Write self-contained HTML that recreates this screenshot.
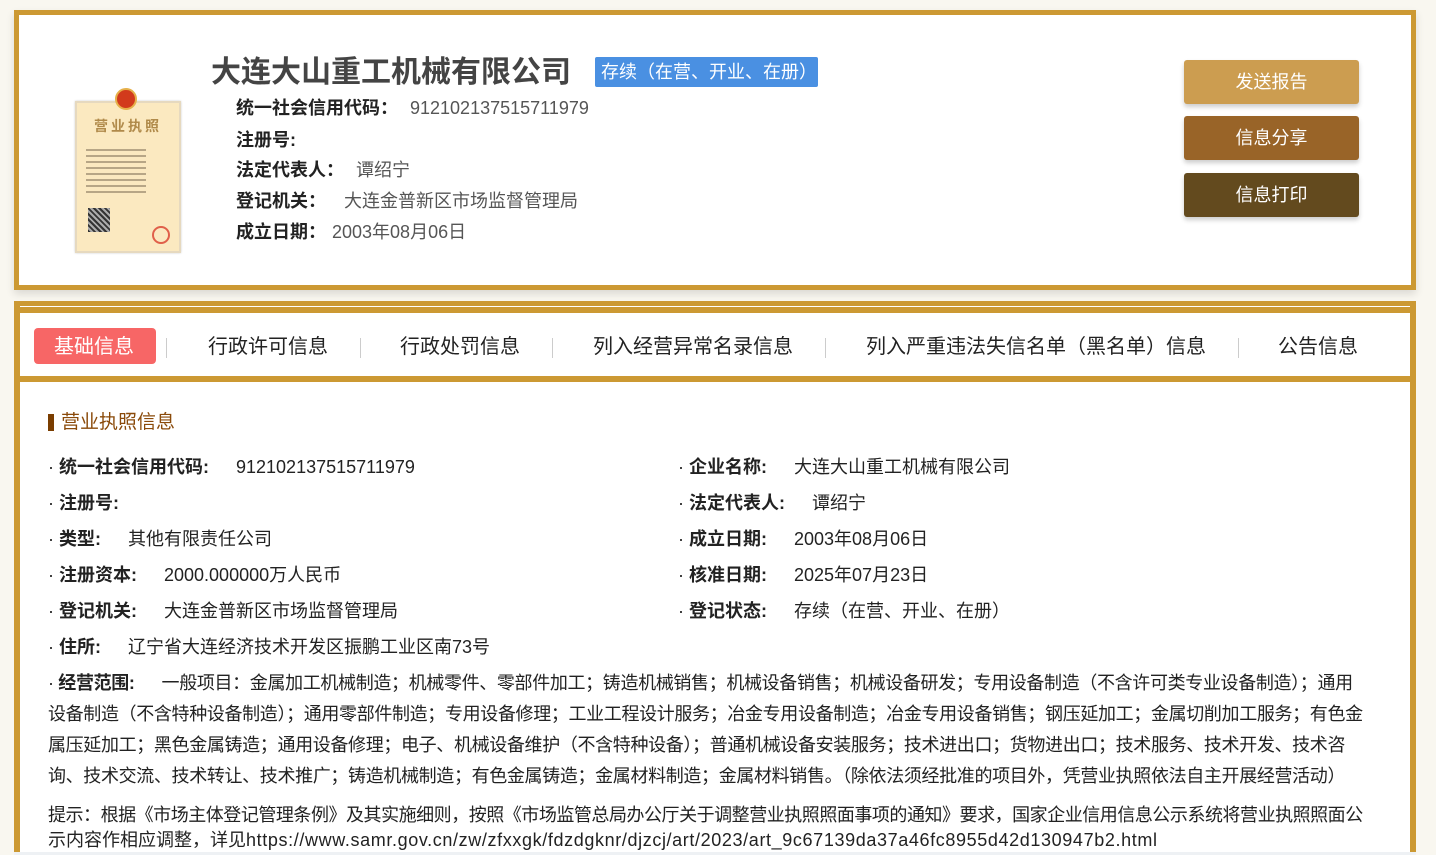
<!DOCTYPE html>
<html style="overflow:hidden;width:1436px;height:855px"><head><meta charset="utf-8"><style>
*{margin:0;padding:0;box-sizing:border-box}
body{width:1436px;height:855px;overflow:hidden;background:#f9f7f0;font-family:"Liberation Sans","Noto Sans CJK SC",sans-serif;color:#222;position:relative}
.a{position:absolute;white-space:nowrap;line-height:24px}
.top{position:absolute;left:14px;top:10px;width:1402px;height:280px;border:5px solid #cc9933;background:#fff;box-shadow:0 4px 8px rgba(0,0,0,.12)}
.box2{position:absolute;left:14px;top:301px;width:1402px;height:554px;background:#cc9933}
.btn{position:absolute;left:1184px;width:175px;height:44px;border-radius:3px;color:#fff;font-size:18px;text-align:center;line-height:44px;box-shadow:0 3px 5px rgba(0,0,0,.2)}
.f{font-size:18px}
.l{font-weight:bold;color:#222}
.v{color:#555}
.tab{position:absolute;top:335px;font-size:20px;color:#222;line-height:24px;white-space:nowrap}
.sep{position:absolute;top:338px;width:1px;height:20px;background:#ccc}
.c{font-size:18px;color:#222}
.c b{margin-right:27px}
.s{letter-spacing:-0.35px}
</style></head><body>
<div class="top"></div>
<div style="position:absolute;left:75px;top:101px;width:106px;height:152px;background:#fbe9c0;border:2px solid #e6d9bf;box-shadow:0 0 2px #ccc"></div>
<div style="position:absolute;left:115px;top:88px;width:22px;height:22px;border-radius:50%;background:#d23a1c;border:2px solid #e6b04a"></div>
<div class="a" style="left:94px;top:114px;font-size:14px;color:#b08a4a;font-weight:bold;letter-spacing:3px">营业执照</div>
<div style="position:absolute;left:86px;top:145px;width:60px;height:50px;background:repeating-linear-gradient(#fbe9c0 0 4px,#8a7a60 4px 6px);opacity:.6"></div>
<div style="position:absolute;left:88px;top:208px;width:22px;height:24px;background:repeating-linear-gradient(45deg,#333 0 2px,#aaa 2px 4px)"></div>
<div style="position:absolute;left:152px;top:226px;width:18px;height:18px;border-radius:50%;border:2px solid #e0604a"></div>

<div class="a" style="left:211px;top:55px;font-size:30px;line-height:36px;font-weight:bold;color:#444">大连大山重工机械有限公司</div>
<div class="a" style="left:595px;top:57px;width:223px;height:30px;background:#4a90e2;color:#fff;font-size:18px;line-height:30px;border-radius:2px;padding-left:6px">存续（在营、开业、在册）</div>
<div class="a f" style="left:236px;top:96px"><span class="l">统一社会信用代码：</span><span class="v" style="margin-left:12px">912102137515711979</span></div>
<div class="a f" style="left:236px;top:128px"><span class="l">注册号:</span></div>
<div class="a f" style="left:236px;top:158px"><span class="l">法定代表人：</span><span class="v" style="margin-left:12px">谭绍宁</span></div>
<div class="a f" style="left:236px;top:189px"><span class="l">登记机关：</span><span class="v" style="margin-left:18px">大连金普新区市场监督管理局</span></div>
<div class="a f" style="left:236px;top:220px"><span class="l">成立日期：</span><span class="v" style="margin-left:6px">2003年08月06日</span></div>

<div class="btn" style="top:60px;background:#cc9d50">发送报告</div>
<div class="btn" style="top:116px;background:#996428">信息分享</div>
<div class="btn" style="top:173px;background:#634a1e">信息打印</div>

<div class="box2"></div>
<div style="position:absolute;left:20px;top:306px;width:1390px;height:1px;background:#fff"></div>
<div style="position:absolute;left:20px;top:313px;width:1390px;height:63px;background:#fff"></div>
<div style="position:absolute;left:20px;top:382px;width:1390px;height:470px;background:#fff"></div>
<div style="position:absolute;left:14px;top:852px;width:1402px;height:3px;background:#eef1f4"></div>

<div style="position:absolute;left:34px;top:328px;width:122px;height:36px;background:#f76666;border-radius:4px"></div>
<div class="tab" style="left:54px;color:#fff">基础信息</div>
<div class="sep" style="left:166px"></div>
<div class="tab" style="left:208px">行政许可信息</div>
<div class="sep" style="left:360px"></div>
<div class="tab" style="left:400px">行政处罚信息</div>
<div class="sep" style="left:552px"></div>
<div class="tab" style="left:593px">列入经营异常名录信息</div>
<div class="sep" style="left:825px"></div>
<div class="tab" style="left:866px">列入严重违法失信名单（黑名单）信息</div>
<div class="sep" style="left:1238px"></div>
<div class="tab" style="left:1278px">公告信息</div>

<div style="position:absolute;left:48px;top:414px;width:6px;height:17px;background:#7a3d00"></div>
<div class="a" style="left:61px;top:411px;font-size:19px;color:#8a4a0a">营业执照信息</div>

<div class="a c" style="left:48px;top:455px">· <b>统一社会信用代码:</b>912102137515711979</div>
<div class="a c" style="left:48px;top:491px">· <b>注册号:</b></div>
<div class="a c" style="left:48px;top:527px">· <b>类型:</b>其他有限责任公司</div>
<div class="a c" style="left:48px;top:563px">· <b>注册资本:</b>2000.000000万人民币</div>
<div class="a c" style="left:48px;top:599px">· <b>登记机关:</b>大连金普新区市场监督管理局</div>
<div class="a c" style="left:48px;top:635px">· <b>住所:</b>辽宁省大连经济技术开发区振鹏工业区南73号</div>

<div class="a c" style="left:678px;top:455px">· <b>企业名称:</b>大连大山重工机械有限公司</div>
<div class="a c" style="left:678px;top:491px">· <b>法定代表人:</b>谭绍宁</div>
<div class="a c" style="left:678px;top:527px">· <b>成立日期:</b>2003年08月06日</div>
<div class="a c" style="left:678px;top:563px">· <b>核准日期:</b>2025年07月23日</div>
<div class="a c" style="left:678px;top:599px">· <b>登记状态:</b>存续（在营、开业、在册）</div>

<div class="a c s" style="left:48px;top:671px">· <b>经营范围:</b>一般项目：金属加工机械制造；机械零件、零部件加工；铸造机械销售；机械设备销售；机械设备研发；专用设备制造（不含许可类专业设备制造）；通用</div>
<div class="a c s" style="left:48px;top:702px">设备制造（不含特种设备制造）；通用零部件制造；专用设备修理；工业工程设计服务；冶金专用设备制造；冶金专用设备销售；钢压延加工；金属切削加工服务；有色金</div>
<div class="a c s" style="left:48px;top:733px">属压延加工；黑色金属铸造；通用设备修理；电子、机械设备维护（不含特种设备）；普通机械设备安装服务；技术进出口；货物进出口；技术服务、技术开发、技术咨</div>
<div class="a c s" style="left:48px;top:764px">询、技术交流、技术转让、技术推广；铸造机械制造；有色金属铸造；金属材料制造；金属材料销售。（除依法须经批准的项目外，凭营业执照依法自主开展经营活动）</div>
<div class="a c" style="left:48px;top:803px;letter-spacing:-0.47px">提示：根据《市场主体登记管理条例》及其实施细则，按照《市场监管总局办公厅关于调整营业执照照面事项的通知》要求，国家企业信用信息公示系统将营业执照照面公</div>
<div class="a c" style="left:48px;top:828px">示内容作相应调整，详见<span style="letter-spacing:0.62px">https://www.samr.gov.cn/zw/zfxxgk/fdzdgknr/djzcj/art/2023/art_9c67139da37a46fc8955d42d130947b2.html</span></div>
</body></html>
